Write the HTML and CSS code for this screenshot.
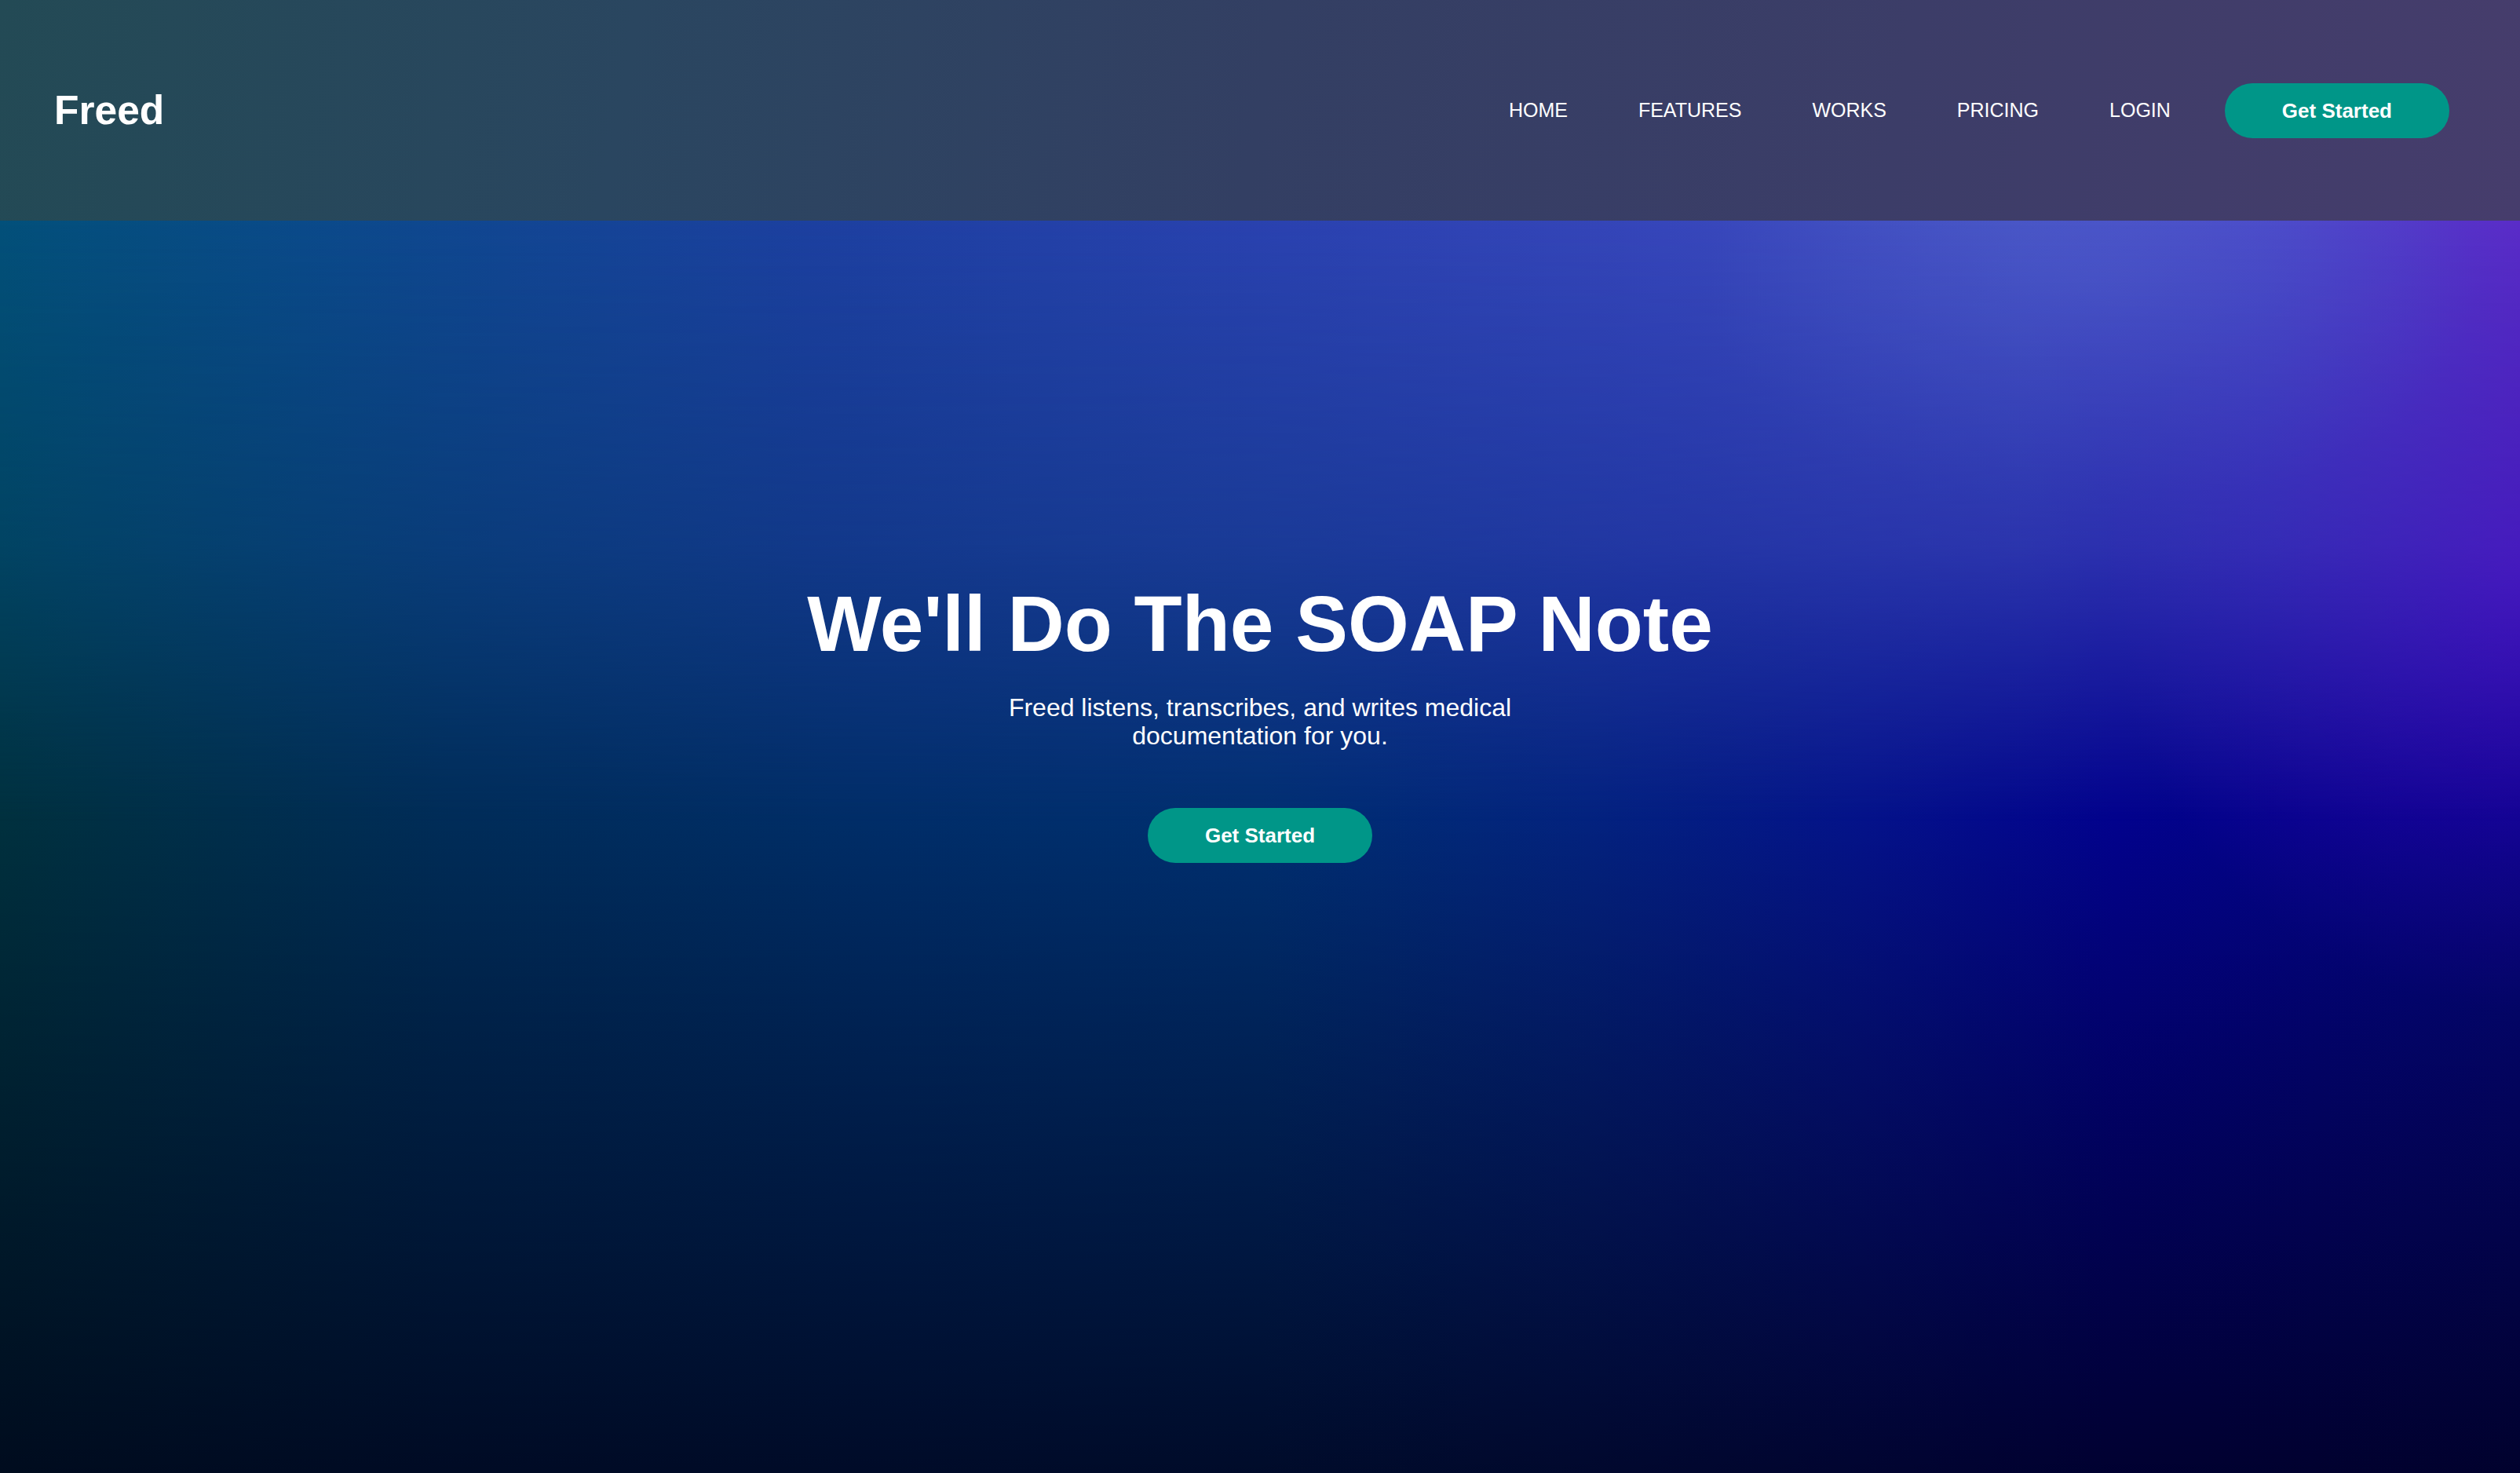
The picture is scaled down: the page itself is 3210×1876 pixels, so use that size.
FILE: index.html
```html
<!DOCTYPE html>
<html lang="en">
<head>
<meta charset="utf-8">
<title>Freed</title>
<link rel="stylesheet" href="styles.css">
</head>
<body>
<div class="page">
  <header class="site-header">
    <a class="logo" href="#">Freed</a>
    <nav class="main-nav">
      <ul class="nav-links">
        <li><a href="#">HOME</a></li>
        <li><a href="#">FEATURES</a></li>
        <li><a href="#">WORKS</a></li>
        <li><a href="#">PRICING</a></li>
        <li><a href="#">LOGIN</a></li>
      </ul>
      <a class="btn" href="#">Get Started</a>
    </nav>
  </header>
  <main class="hero">
    <h1 class="hero-title">We'll Do The SOAP Note</h1>
    <p class="hero-sub">Freed listens, transcribes, and writes medical documentation for you.</p>
    <a class="btn hero-btn" href="#">Get Started</a>
  </main>
</div>
</body>
</html>
```

FILE: styles.css
```css
* { box-sizing: border-box; }
html, body { margin: 0; padding: 0; height: 100%; }
body {
  font-family: "Liberation Sans", Arial, sans-serif;
  color: #fff;
  background: #000018;
}
a { color: #fff; text-decoration: none; }

.page {
  min-height: 100vh;
  display: flex;
  flex-direction: column;
}

.site-header {
  height: 281px;
  flex: 0 0 auto;
  display: flex;
  align-items: center;
  justify-content: space-between;
  padding: 0 90px 0 69px;
  background: linear-gradient(100deg, #234a55 0%, #2a4660 25%, #333f63 50%, #3c3d68 75%, #463d6c 100%);
}

.logo {
  font-size: 51.5px;
  font-weight: 700;
  line-height: 1;
}

.main-nav {
  display: flex;
  align-items: center;
  gap: 69px;
}

.nav-links {
  list-style: none;
  margin: 0;
  padding: 0;
  display: flex;
  gap: 90px;
}
.nav-links a {
  font-size: 25px;
  line-height: 1;
}

.btn {
  display: inline-block;
  background: #009688;
  color: #fff;
  font-size: 26px;
  font-weight: 700;
  line-height: 30px;
  padding: 20px 73px;
  border-radius: 35px;
}

/* hero: base = lower palette; ::before = upper palette faded downward */
.hero {
  position: relative;
  isolation: isolate;
  flex: 1 1 auto;
  display: flex;
  flex-direction: column;
  align-items: center;
  text-align: center;
  padding-top: 456px;
  background:
    linear-gradient(to bottom, rgba(0,0,20,0) 48%, rgba(0,0,20,0.25) 64%, rgba(0,0,20,0.48) 80%, rgba(0,0,20,0.76) 100%),
    radial-gradient(ellipse 750px 800px at 100% 28%, rgba(42,0,178,0.95), rgba(42,0,178,0) 70%),
    linear-gradient(90deg, #00303e 0%, #002c58 18%, #002d68 35%, #002f70 50%, #03227e 63%, #041289 74%, #02028c 84%, #04067e 100%);
}
.hero::before {
  content: "";
  position: absolute;
  inset: 0;
  z-index: -1;
  background:
    radial-gradient(ellipse 700px 420px at 83% 5%, rgba(80,96,205,0.55), rgba(80,96,205,0) 70%),
    linear-gradient(90deg, #02507a 0%, #0a4a8a 12%, #1c40a0 32%, #2a42b0 51%, #3646ba 66%, #4450c2 80%, #4a46c8 90%, #5a2cc8 100%);
  -webkit-mask-image: linear-gradient(to bottom, #000 0%, rgba(0,0,0,0.62) 26%, rgba(0,0,0,0) 48%);
  mask-image: linear-gradient(to bottom, #000 0%, rgba(0,0,0,0.62) 26%, rgba(0,0,0,0) 48%);
}

.hero-title {
  margin: 0;
  font-size: 100px;
  font-weight: 700;
  line-height: normal;
}

.hero-sub {
  margin: 31px 0 0;
  max-width: 660px;
  font-size: 32px;
  line-height: 36px;
}

.hero-btn {
  margin-top: 74px;
}
```
